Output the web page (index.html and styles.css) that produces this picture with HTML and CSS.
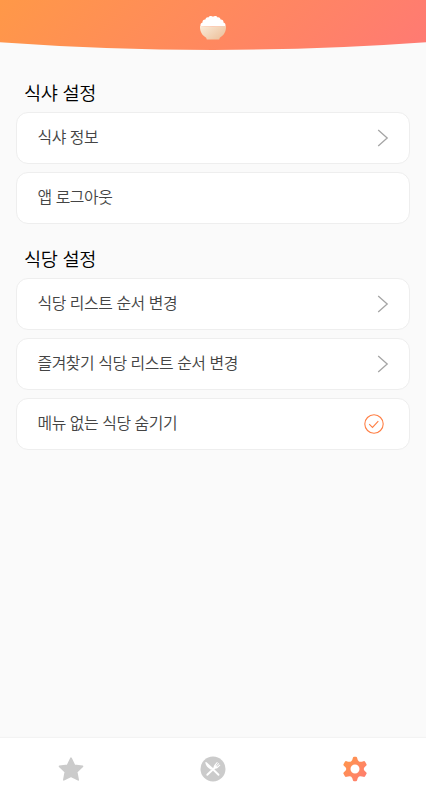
FILE: index.html
```html
<!DOCTYPE html>
<html lang="ko">
<head>
<meta charset="utf-8">
<meta name="viewport" content="width=device-width, initial-scale=1">
<title>식샤 설정</title>
<link rel="stylesheet" href="styles.css">
</head>
<body>
<header class="header">
  <svg class="header-bg" viewBox="0 0 426 50" aria-hidden="true">
    <defs>
      <linearGradient id="warm" gradientUnits="userSpaceOnUse" x1="95" y1="-93" x2="331" y2="143">
        <stop offset="0" stop-color="#ff9848"/><stop offset="1" stop-color="#ff7a73"/>
      </linearGradient>
    </defs>
    <path fill="url(#warm)" d="M0 0H426V42.2Q213 57.6 0 42.2Z"/>
  </svg>
  <svg class="bowl" viewBox="0 0 28 26" aria-hidden="true">
    <defs>
      <linearGradient id="cream" x1="0" y1="0" x2="1" y2=".7">
        <stop offset="0" stop-color="#faecd9"/><stop offset="1" stop-color="#edc29e"/>
      </linearGradient>
    </defs>
    <path fill="#fff" d="M1.6 11.4C1 9.4 2 8 3.5 7.6C3.2 5.6 4.8 4.3 6.4 4.5C6.8 2.7 8.2 2 9.4 2.4C10.4.6 12.8.6 14 1.7C15.2.6 17.7.6 18.6 2.4C19.8 2 21.2 2.7 21.6 4.5C23.2 4.3 24.8 5.6 24.5 7.6C26 8 27 9.4 26.4 11.4Z"/>
    <path fill="url(#cream)" d="M1 11.1C6 11.8 22 11.8 27 11.1C27.3 17 24.5 20.8 20.8 22.7L20.2 24.4H7.8L7.2 22.7C3.5 20.8.7 17 1 11.1Z"/>
  </svg>
</header>
<main class="content">
  <section class="group">
    <h2 class="title">식샤 설정</h2>
    <ul class="list">
      <li class="item"><span>식샤 정보</span><svg class="arrow" viewBox="0 0 12 18"><path d="M1.2 1L10.2 9L1.2 17"/></svg></li>
      <li class="item"><span>앱 로그아웃</span></li>
    </ul>
  </section>
  <section class="group">
    <h2 class="title">식당 설정</h2>
    <ul class="list">
      <li class="item"><span>식당 리스트 순서 변경</span><svg class="arrow" viewBox="0 0 12 18"><path d="M1.2 1L10.2 9L1.2 17"/></svg></li>
      <li class="item"><span>즐겨찾기 식당 리스트 순서 변경</span><svg class="arrow" viewBox="0 0 12 18"><path d="M1.2 1L10.2 9L1.2 17"/></svg></li>
      <li class="item"><span>메뉴 없는 식당 숨기기</span><svg class="check" viewBox="0 0 20 20"><circle cx="10" cy="10" r="9.2"/><path d="M5.2 10.1L8.5 13.4L14.3 7.1"/></svg></li>
    </ul>
  </section>
</main>
<nav class="tabs">
  <a class="tab"><svg viewBox="0 0 26 26"><path fill="#cbcbcb" stroke="#cbcbcb" stroke-width="1.6" stroke-linejoin="round" d="M13 2.2L16.5 9.3L24.5 10.3L18.7 15.8L20.2 23.9L13 20.2L5.8 23.9L7.3 15.8L1.5 10.3L9.5 9.3Z"/></svg></a>
  <a class="tab"><svg viewBox="0 0 26 26">
    <circle cx="13" cy="13" r="12.5" fill="#cbcbcb"/>
    <path fill="#fff" d="M5.2 6.4Q5.6 5.7 6.6 6.2L12.9 11.9L11 13.7Q6.2 11 5.2 6.4Z"/>
    <path fill="none" stroke="#fff" stroke-width="1.9" stroke-linecap="round" d="M12.4 12.8L18.5 18.8M7.3 18.8L15 11.5"/>
    <path fill="#fff" d="M13.8 12.2Q13.2 10.4 14.4 8.9L17 6L17.8 6.6L15.6 9.3L16.1 9.8L18.6 7L19.3 7.7L16.6 10.3L17.1 10.8L19.9 8.6L20.4 9.3L17.6 12Q16 13.1 13.8 12.2Z"/>
  </svg></a>
  <a class="tab"><svg viewBox="0 0 26 26">
    <defs><linearGradient id="gear" x1="0" y1="0" x2="1" y2="1"><stop offset="0" stop-color="#ff9848"/><stop offset="1" stop-color="#ff7a73"/></linearGradient></defs>
    <path fill="url(#gear)" fill-rule="evenodd" d="M12.1.7H13.9Q14.9.7 15.1 1.7Q15.5 4.5 17 5.4Q18.5 6.3 21.4 5.2Q22.5 4.8 23.1 5.7L24.4 7.9Q25 9 24.1 9.7Q21.7 11.5 21.7 13Q21.7 14.5 24.1 16.3Q25 17 24.4 18.1L23.1 20.3Q22.5 21.2 21.4 20.8Q18.5 19.7 17 20.6Q15.5 21.5 15.1 24.3Q14.9 25.3 13.9 25.3H12.1Q11.1 25.3 10.9 24.3Q10.5 21.5 9 20.6Q7.5 19.7 4.6 20.8Q3.5 21.2 2.9 20.3L1.6 18.1Q1 17 1.9 16.3Q4.3 14.5 4.3 13Q4.3 11.5 1.9 9.7Q1 9 1.6 7.9L2.9 5.7Q3.5 4.8 4.6 5.2Q7.5 6.3 9 5.4Q10.5 4.5 10.9 1.7Q11.1.7 12.1.7ZM13 8.5A4.5 4.5 0 1 0 13 17.5A4.5 4.5 0 1 0 13 8.5Z"/>
  </svg></a>
</nav>
</body>
</html>
```
FILE: styles.css
```css
* { box-sizing: border-box; }
body {
  margin: 0;
  height: 800px;
  display: flex;
  flex-direction: column;
  background: #fafafa;
  font-family: "Noto Sans CJK KR", sans-serif;
  overflow: hidden;
}
.header {
  position: relative;
  height: 50px;
  display: flex;
  justify-content: center;
  padding-top: 15px;
}
.header-bg { position: absolute; top: 0; left: 0; width: 100%; height: 50px; }
.bowl { position: relative; width: 28px; height: 26px; }
.content { flex: 1; padding: 28px 16px 0; }
.group { margin-bottom: 20px; }
.title {
  margin: 0;
  padding-left: 8px;
  height: 34px;
  line-height: 27px;
  font-size: 18.6px;
  font-weight: 350;
  letter-spacing: -0.3px;
  color: #000;
}
.list {
  margin: 0;
  padding: 0;
  list-style: none;
  display: flex;
  flex-direction: column;
  gap: 8px;
}
.item {
  height: 52px;
  padding: 0 20px 0 20.5px;
  display: flex;
  align-items: center;
  justify-content: space-between;
  background: #fff;
  border: 1px solid #eee;
  border-radius: 12px;
  font-size: 15.9px;
  font-weight: 350;
  letter-spacing: -0.44px;
  line-height: 24px;
  color: #444;
}
.item span { padding-bottom: 2px; }
.arrow { width: 12px; height: 18px; fill: none; stroke: #a5a5a5; stroke-width: 1.3; }
.check { width: 20px; height: 20px; margin-right: 5px; fill: none; stroke: #ff7f45; stroke-width: 1.1; }
.tabs {
  height: 62px;
  display: flex;
  background: #fff;
  box-shadow: 0 -1px 1px #f3f3f3;
}
.tab { flex: 1; display: flex; align-items: center; justify-content: center; }
.tab svg { width: 26px; height: 26px; }
```
